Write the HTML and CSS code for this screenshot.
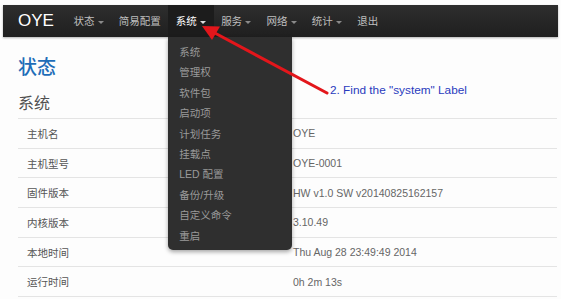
FILE: index.html
```html
<!DOCTYPE html>
<html>
<head>
	<title>OYE - 状态</title>
	<link rel="stylesheet" href="styles.css">
</head>
<body>
<!-- top navigation bar -->
<div class="navbar">
	<span class="brand">OYE</span>
	<ul class="nav">
		<li>状态 <span class="caret"></span></li>
		<li>简易配置</li>
		<li class="active">系统 <span class="caret"></span>
			<ul class="dropdown">
				<li>系统</li>
				<li>管理权</li>
				<li>软件包</li>
				<li>启动项</li>
				<li>计划任务</li>
				<li>挂载点</li>
				<li>LED 配置</li>
				<li>备份/升级</li>
				<li>自定义命令</li>
				<li>重启</li>
			</ul>
		</li>
		<li>服务 <span class="caret"></span></li>
		<li>网络 <span class="caret"></span></li>
		<li>统计 <span class="caret"></span></li>
		<li>退出</li>
	</ul>
</div>

<div class="container">
	<h1>状态</h1>
	<h2>系统</h2>
	<div class="info">
		<div class="row"><span class="key">主机名</span><span class="val">OYE</span></div>
		<div class="row"><span class="key">主机型号</span><span class="val">OYE-0001</span></div>
		<div class="row"><span class="key">固件版本</span><span class="val">HW v1.0 SW v20140825162157</span></div>
		<div class="row"><span class="key">内核版本</span><span class="val">3.10.49</span></div>
		<div class="row"><span class="key">本地时间</span><span class="val">Thu Aug 28 23:49:49 2014</span></div>
		<div class="row"><span class="key">运行时间</span><span class="val">0h 2m 13s</span></div>
	</div>
</div>

<!-- annotation drawn over the screenshot -->
<svg class="arrow" width="561" height="299" viewBox="0 0 561 299">
	<line x1="327" y1="93" x2="213" y2="32" stroke="#e3161b" stroke-width="3" stroke-linecap="round"/>
	<polygon points="202,26 220,26.5 212,40" fill="#e3161b"/>
</svg>
<div class="note">2. Find the "system" Label</div>
</body>
</html>
```

FILE: styles.css
```css
body {
	margin: 0;
	padding-top: 5px;
	background-color: #fdfdfd;
	font-family: "Liberation Sans", "Noto Sans CJK SC", sans-serif;
	color: #404040;
	position: relative;
	height: 294px;
	overflow: hidden;
}

.navbar {
	margin: 0 3px;
	height: 32px;
	display: flex;
	align-items: center;
	background: linear-gradient(#2e2e2e, #1f1f1f);
	box-shadow: 0 1px 2px rgba(0, 0, 0, 0.3);
}

.brand {
	color: #fff;
	font-size: 17px;
	padding-left: 15px;
	margin-right: 12px;
}

.nav {
	list-style: none;
	margin: 0;
	padding: 0;
	display: flex;
	height: 32px;
}

.nav > li {
	position: relative;
	padding: 0 7.5px;
	line-height: 32px;
	font-size: 10.5px;
	color: #bfbfbf;
	font-family: "Noto Sans CJK SC", sans-serif;
}

.nav > li.active {
	color: #fff;
	background-color: #1c1c1c;
}

.caret {
	display: inline-block;
	width: 0;
	height: 0;
	border-left: 3px solid transparent;
	border-right: 3px solid transparent;
	border-top: 3px solid #8a8a8a;
	vertical-align: middle;
	margin-left: 1px;
}

.active .caret {
	border-top-color: #ddd;
}

.dropdown {
	position: absolute;
	top: 32px;
	left: 0;
	width: 124px;
	margin: 0;
	padding: 5px 0 4px;
	list-style: none;
	background-color: #2f2f2f;
	border-radius: 0 0 5px 5px;
	box-shadow: 0 2px 4px rgba(0, 0, 0, 0.35);
}

.dropdown li {
	padding-left: 11px;
	line-height: 20.4px;
	font-size: 10.5px;
	color: #9a9a9a;
	font-family: "Liberation Sans", "Noto Sans CJK SC", sans-serif;
}

.container {
	padding: 0 4px 0 18px;
}

h1 {
	margin: 17px 0 0;
	font-size: 19px;
	line-height: 24px;
	font-weight: 500;
	color: #1f6db8;
	font-family: "Noto Sans CJK SC", sans-serif;
}

h2 {
	margin: 13px 0 5px;
	font-size: 16px;
	line-height: 22px;
	font-weight: normal;
	color: #505050;
	font-family: "Noto Sans CJK SC", sans-serif;
}

.info {
	border-bottom: 1px solid #e4e4e4;
}

.row {
	display: flex;
	align-items: center;
	box-sizing: border-box;
	height: 29.7px;
	border-top: 1px solid #e4e4e4;
	font-size: 10.5px;
	color: #555;
}

.key {
	width: 266px;
	padding-left: 9px;
	box-sizing: border-box;
	font-family: "Noto Sans CJK SC", sans-serif;
}

.val {
	padding-left: 9px;
	color: #666;
}

.arrow {
	position: absolute;
	top: 0;
	left: 0;
	pointer-events: none;
}

.note {
	position: absolute;
	left: 330px;
	top: 83px;
	font-size: 11.8px;
	color: #2a3bbd;
}
```
